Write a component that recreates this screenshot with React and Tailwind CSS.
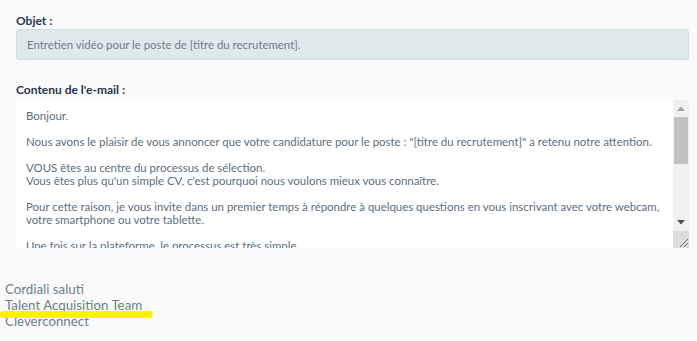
import React from 'react';

const body = `Bonjour.

Nous avons le plaisir de vous annoncer que votre candidature pour le poste : "[titre du recrutement]" a retenu notre attention.

VOUS êtes au centre du processus de sélection.
Vous êtes plus qu'un simple CV, c'est pourquoi nous voulons mieux vous connaître.

Pour cette raison, je vous invite dans un premier temps à répondre à quelques questions en vous inscrivant avec votre webcam, votre smartphone ou votre tablette.

Une fois sur la plateforme, le processus est très simple.

Vous pouvez répondre à votre rythme, quand vous le souhaitez.`;

const Scrollbar = () => (
  <div className="w-[16px] flex flex-col bg-[#f1f1f1] shrink-0">
    <div className="h-[17px] flex items-center justify-center">
      <svg width="8" height="5" viewBox="0 0 8 5"><path d="M0 5 L4 0.5 L8 5 Z" fill="#a3a3a3" /></svg>
    </div>
    <div className="flex-1 px-[1px]">
      <div className="h-[47px] bg-[#c1c1c1]" />
    </div>
    <div className="h-[17px] flex items-center justify-center">
      <svg width="8" height="5" viewBox="0 0 8 5"><path d="M0 0 L8 0 L4 4.5 Z" fill="#505050" /></svg>
    </div>
    <div className="h-[17px] bg-[#dcdcdc] flex items-end justify-end">
      <svg width="12" height="12" viewBox="0 0 12 12">
        <path d="M3 11 L11 3 M7 11 L11 7" stroke="#6b6b6b" strokeWidth="1" />
      </svg>
    </div>
  </div>
);

const App = () => {
  return (
    <div className="bg-[#fafafa] min-h-screen font-['Lato',sans-serif]">
      <div className="pl-4 pr-2 pt-[13px]">
        {/* Objet */}
        <label className="block text-[12px] leading-4 font-bold text-[#26364a]">Objet :</label>
        <div className="h-[31px] flex items-center px-[10px] rounded-[3px] border border-[#d6dee3] bg-[#e1e8ec] text-[11.4px] text-[#6b7d8c]">
          Entretien vidéo pour le poste de [titre du recrutement].
        </div>

        {/* Contenu */}
        <label className="block mt-[22px] mb-[2px] text-[12px] leading-4 font-bold text-[#26364a]">
          Contenu de l'e-mail :
        </label>
        <div className="flex h-[148px] bg-white">
          <textarea
            readOnly
            defaultValue={body}
            className="flex-1 h-full resize-none overflow-hidden bg-white pt-[9px] pl-[10px] pr-[4px] text-[11.45px] leading-[13px] text-[#5d6e7d] outline-none font-['Lato',sans-serif]"
          />
          <Scrollbar />
        </div>
      </div>

      {/* Signature */}
      <div className="relative mt-[33px] px-[5px] text-[13.3px] leading-4 text-[#6e7f8d]">
        <p>Cordiali saluti</p>
        <p>Talent Acquisition Team</p>
        <p>Cleverconnect</p>
        <div className="absolute left-0 top-[30px] w-[153px] h-[7px] rounded-full bg-[#fff200]" />
      </div>
    </div>
  );
};

export default App;
